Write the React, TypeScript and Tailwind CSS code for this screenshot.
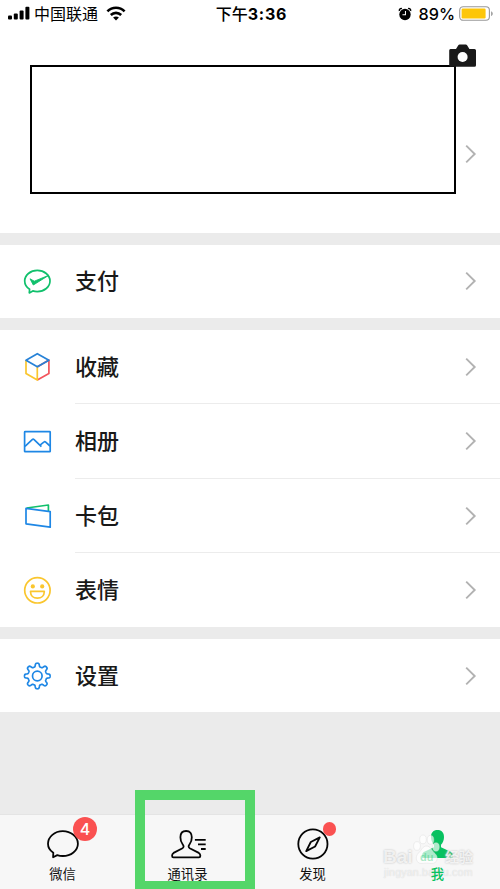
import React from 'react';

const GEAR_PATH = (() => {
  const points: string[] = [];
  for (let i = 0; i < 240; i++) {
    const angle = (i / 240) * Math.PI * 2;
    const radius = 11.1 + 1.75 * Math.tanh(2.2 * (Math.cos(angle * 8) - 0.1));
    points.push(`${(20.3 + radius * Math.sin(angle)).toFixed(2)} ${(20 - radius * Math.cos(angle)).toFixed(2)}`);
  }
  return `M${points.join('L')}Z`;
})();

function PayIcon() {
  return (
    <svg className="h-10 w-10" viewBox="0 0 40 40" fill="none" stroke="#10c06c" strokeWidth="1.7" strokeLinejoin="round">
      <path d="M12.3 30.9L12.6 27.3C9.5 25.3 7.7 22.3 7.7 19C7.7 13.1 13.4 8.4 20.3 8.4S33 13.1 33 19S27.3 29.6 20.3 29.6C18.7 29.6 17.2 29.4 15.8 28.9Z" />
      <path d="M13 16.8L16.3 23L32 13.2L17.3 19.2Z" fill="#10c06c" strokeWidth="0.9" />
    </svg>
  );
}

function CubeIcon() {
  return (
    <svg className="h-10 w-10" viewBox="0 0 40 40" fill="none" strokeWidth="1.7" strokeLinejoin="round">
      <path d="M20.3 33L31.9 26.5V13L20.3 20" stroke="#f3545c" />
      <path d="M9 13V26.5L20.3 33V20" stroke="#fac62e" />
      <path d="M20.3 6.7L31.9 13.2L20.3 19.8L9 13.2Z" stroke="#2782d7" />
    </svg>
  );
}

function AlbumIcon() {
  return (
    <svg className="h-10 w-10" viewBox="0 0 40 40" fill="none" stroke="#1e87e5" strokeWidth="1.7" strokeLinejoin="round">
      <rect x="7.6" y="9.7" width="25.6" height="20" rx="0.5" />
      <path d="M8 24.3L15.2 17.6C15.8 17.1 16.5 17.1 17.1 17.6L24.4 24.6M23 23.1L26.8 20.1C27.4 19.6 28.1 19.6 28.7 20.1L33 24" />
    </svg>
  );
}

function CardsIcon() {
  return (
    <svg className="h-10 w-10" viewBox="0 0 40 40" fill="none" strokeWidth="1.7" strokeLinejoin="round">
      <path d="M9.6 12L31.4 9V15" stroke="#10c06c" />
      <path d="M9 12.4L33.2 15.6V31.2L9 27.8Z" stroke="#1e87e5" />
    </svg>
  );
}

function SmileIcon() {
  return (
    <svg className="h-10 w-10" viewBox="0 0 40 40" fill="none" stroke="#fac62e" strokeWidth="1.7" strokeLinejoin="round">
      <circle cx="20.4" cy="20.3" r="12.7" />
      <circle cx="15.8" cy="16.4" r="2.1" fill="#fac62e" stroke="none" />
      <circle cx="25.2" cy="16.4" r="2.1" fill="#fac62e" stroke="none" />
      <path d="M13.5 21.4H27.3C27.3 25.4 24.4 28.2 20.4 28.2S13.5 25.4 13.5 21.4Z" />
    </svg>
  );
}

function GearIcon() {
  return (
    <svg className="h-10 w-10" viewBox="0 0 40 40" fill="none" stroke="#1e87e5" strokeWidth="1.7" strokeLinejoin="round">
      <path d={GEAR_PATH} />
      <circle cx="20.3" cy="20" r="4.8" />
    </svg>
  );
}

function Chevron() {
  return (
    <svg className="h-5 w-3 shrink-0" viewBox="0 0 12 20" fill="none" stroke="#b2b2b2" strokeWidth="1.9">
      <path d="M1.2 1.6L9.7 10L1.2 18.4" />
    </svg>
  );
}

function Row({ icon, label, divider }: { icon: React.ReactNode; label: string; divider?: boolean }) {
  return (
    <div className="flex h-full min-h-0 items-center pl-[17px]">
      {icon}
      <div className={`ml-[18px] flex h-full flex-1 items-center justify-between border-b pr-[23px] ${divider ? 'border-[#ececec]' : 'border-white'}`}>
        <span className="text-[22px] leading-8 font-medium text-[#191919]">{label}</span>
        <Chevron />
      </div>
    </div>
  );
}

function StatusBar() {
  return (
    <header className="grid h-7 grid-cols-3 items-center text-[16px] leading-6 font-medium text-black">
      <div className="flex items-center pl-2">
        <svg className="h-4 w-[22px]" viewBox="0 0 22 16">
          <rect x="0" y="9.5" width="4" height="4" rx="1" />
          <rect x="5.8" y="7.5" width="4" height="6" rx="1" />
          <rect x="11.6" y="4.5" width="4" height="9" rx="1" />
          <rect x="17.4" y="0.8" width="4" height="12.7" rx="1" />
        </svg>
        <span className="ml-1 font-normal">中国联通</span>
        <svg className="ml-2 h-4 w-5 shrink-0" viewBox="0 0 20 16" fill="none" stroke="#000" strokeWidth="2.6">
          <path d="M1.4 5.4C6.3 .5 13.7 .5 18.6 5.4" />
          <path d="M4.8 9C7.8 6.1 12.2 6.1 15.2 9" />
          <path d="M10 14.4L7.1 11.5C8.8 10 11.2 10 12.9 11.5Z" fill="#000" stroke="none" />
        </svg>
      </div>
      <div className="pl-[3px] text-center font-bold whitespace-nowrap">
        <span className="font-medium">下午</span>
        <span className="tracking-[0.8px]">3:36</span>
      </div>
      <div className="flex items-center justify-end pr-1.5">
        <svg className="mr-[7px] h-[14px] w-[14px]" viewBox="0 0 15 15">
          <circle cx="7.5" cy="8" r="6.1" />
          <path d="M1.5 4.3C1 2.5 2.5 1.2 4.2 1.7M10.8 1.7C12.5 1.2 14 2.5 13.5 4.3" fill="none" stroke="#000" strokeWidth="1.5" />
          <path d="M8 4.3V8.4H4.8" fill="none" stroke="#fff" strokeWidth="1.1" />
        </svg>
        <span className="text-[16.2px] font-medium">89%</span>
        <svg className="ml-1 h-4 w-[35px]" viewBox="0 0 35 16">
          <rect x="0.7" y="0.7" width="29.7" height="13.6" rx="3.5" fill="#fff" stroke="#999" strokeWidth="1.1" />
          <rect x="2.6" y="2.5" width="24" height="10" rx="1.2" fill="#fdc609" />
          <path d="M32.1 5.2C34.3 5.9 34.3 9.3 32.1 10Z" fill="#999" />
        </svg>
      </div>
    </header>
  );
}

function Profile() {
  return (
    <section className="relative h-[205px]">
      <div className="flex items-start pt-[37px] pl-[30px]">
        <div className="h-[129px] w-[426px] border-2 border-black" />
        <div className="mt-[79px] ml-[9px]">
          <Chevron />
        </div>
      </div>
      <svg className="absolute top-4 left-[449px] h-6 w-[27px]" viewBox="0 0 27 24">
        <path d="M1.5 5H7L9.3 1.3Q9.8 .6 10.6 .6H16.8Q17.6 .6 18.1 1.3L20.4 5H25.5Q27 5 27 6.5V21.3Q27 22.8 25.5 22.8H1.5Q.2 22.8 .2 21.3V6.5Q.2 5 1.5 5Z" fill="#191919" />
        <circle cx="13.6" cy="13" r="5" fill="#fff" />
      </svg>
    </section>
  );
}

function Watermark() {
  return (
    <div className="absolute top-[19px] left-[383px] h-12 w-[92px] text-white/75">
      <svg className="absolute top-0 left-[29px] h-[31px] w-[30px]" viewBox="0 0 30 31" fill="#fff" fillOpacity=".68" stroke="#dcdcdc" strokeOpacity=".7" strokeWidth=".6">
        <ellipse cx="5" cy="12" rx="3.4" ry="4.3" />
        <ellipse cx="11" cy="5.4" rx="3.3" ry="4.4" />
        <ellipse cx="18.5" cy="5.8" rx="3.3" ry="4.4" />
        <ellipse cx="24" cy="13" rx="3.3" ry="4.2" />
        <path d="M14.5 12C10.5 12 10 16 6.5 19C2.5 22.5 4 30 10 29.5C13 29 16 29 19 29.5C25.5 30 27 23 23 19.5C19.5 16.5 18.5 12 14.5 12Z" />
      </svg>
      <div className="absolute top-[13px] left-0 flex w-[90px] justify-between text-[19px] leading-5 font-bold [text-shadow:0_0_2px_#b8b8b8]">
        <span className="font-['Liberation_Sans',sans-serif]">Bai</span>
        <span className="text-[14px]">经验</span>
      </div>
      <span className="absolute top-[17px] left-[37px] font-['Liberation_Sans',sans-serif] text-[11px] leading-3 font-bold text-[#07c160]/35">du</span>
      <span className="absolute top-[30px] left-px font-['Liberation_Sans',sans-serif] text-[10.7px] leading-4 tracking-[0.15px] text-white/60 [text-shadow:0_0_1px_#ccc]">jingyan.baidu.com</span>
    </div>
  );
}

function Tab({ label, active, children }: { label: string; active?: boolean; children: React.ReactNode }) {
  return (
    <div className="relative flex flex-col items-center pt-[9px]">
      {children}
      <span className={`text-[13.3px] leading-5 ${active ? 'z-10 font-medium text-[#07c160]' : 'text-[#111]'}`}>{label}</span>
    </div>
  );
}

function TabBar() {
  return (
    <nav className="relative grid h-[75px] grid-cols-4 border-t border-[#e4e4e4] bg-[#f7f7f7]">
      <Tab label="微信">
        <svg className="h-10 w-10" viewBox="0 0 40 40" fill="none" stroke="#050505" strokeWidth="1.8" strokeLinejoin="round">
          <path d="M10.1 33.2L10.3 28.7C7 26.5 5 23.3 5 19.7C5 12.8 11.7 7.1 19.8 7.1S34.9 12.8 34.9 19.7S28 32 19.8 32C17.8 32 16 31.7 14.3 31.1Z" />
        </svg>
        <span className="absolute top-0.5 left-[73px] flex h-6 w-6 items-center justify-center rounded-full bg-[#fa5151] text-[16px] leading-none font-medium text-white">4</span>
      </Tab>
      <Tab label="通讯录">
        <svg className="h-10 w-10" viewBox="0 0 40 40" fill="none" stroke="#050505" strokeWidth="1.8" strokeLinejoin="round">
          <path d="M18.1 7C14 7 12.4 9.6 12.4 13.3C12.4 16.5 13.2 18.5 14.6 20.2C16 22 15.9 23.4 14.5 24.2L5.6 28.9Q4.1 29.9 4.1 31.5V32Q4.1 33.3 5.4 33.3H31Q32.3 33.3 32.3 32V31.5Q32.3 29.9 30.8 28.9L21.7 24.2C20.3 23.4 20.2 22 21.6 20.2C23 18.5 23.8 16.5 23.8 13.3C23.8 9.6 22.2 7 18.1 7Z" />
          <path d="M26.9 15.8H37.7M30 20.4H37.7M33 25H37.7" />
        </svg>
      </Tab>
      <Tab label="发现">
        <svg className="h-10 w-10" viewBox="0 0 40 40" fill="none" stroke="#050505" strokeWidth="1.8" strokeLinejoin="round">
          <circle cx="19.9" cy="20" r="14.6" />
          <path d="M26.8 13.4L22.1 22.5L13.2 27.1L17.8 18Z" />
        </svg>
        <span className="absolute top-[7px] left-[72.5px] h-[13.5px] w-[13.5px] rounded-full bg-[#fa5151]" />
      </Tab>
      <Tab label="我" active>
        <svg className="h-10 w-10" viewBox="0 0 40 40" fill="#07c160">
          <path d="M19.5 6C15.3 6 13 8.7 13 13C13 16 14.1 18.8 16 20.8V23.3L5.8 28Q4.2 29 4.2 31V34H34.8V31Q34.8 29 33.2 28L23 23.3V20.8C24.9 18.8 26 16 26 13C26 8.7 23.7 6 19.5 6Z" />
        </svg>
      </Tab>

      {/* highlighted tab */}
      <div className="absolute -top-[25px] left-[135px] h-[101px] w-[120px] border-[10px] border-[#54d669]" />
      <Watermark />
    </nav>
  );
}

export default function App() {
  return (
    <main className="flex h-[889px] w-[500px] flex-col overflow-hidden bg-[#ebebeb] font-['Inter','Noto_Sans_CJK_SC',sans-serif]">
      <div className="bg-white">
        <StatusBar />
        <Profile />
      </div>
      <div className="mt-3 h-[73px] bg-white">
        <Row icon={<PayIcon />} label="支付" />
      </div>
      <div className="mt-3 grid h-[297px] grid-rows-[74px_75px_74px_74px] bg-white">
        <Row icon={<CubeIcon />} label="收藏" divider />
        <Row icon={<AlbumIcon />} label="相册" divider />
        <Row icon={<CardsIcon />} label="卡包" divider />
        <Row icon={<SmileIcon />} label="表情" />
      </div>
      <div className="mt-3 h-[73px] bg-white pt-px">
        <Row icon={<GearIcon />} label="设置" />
      </div>
      <div className="flex-1" />
      <TabBar />
    </main>
  );
}
